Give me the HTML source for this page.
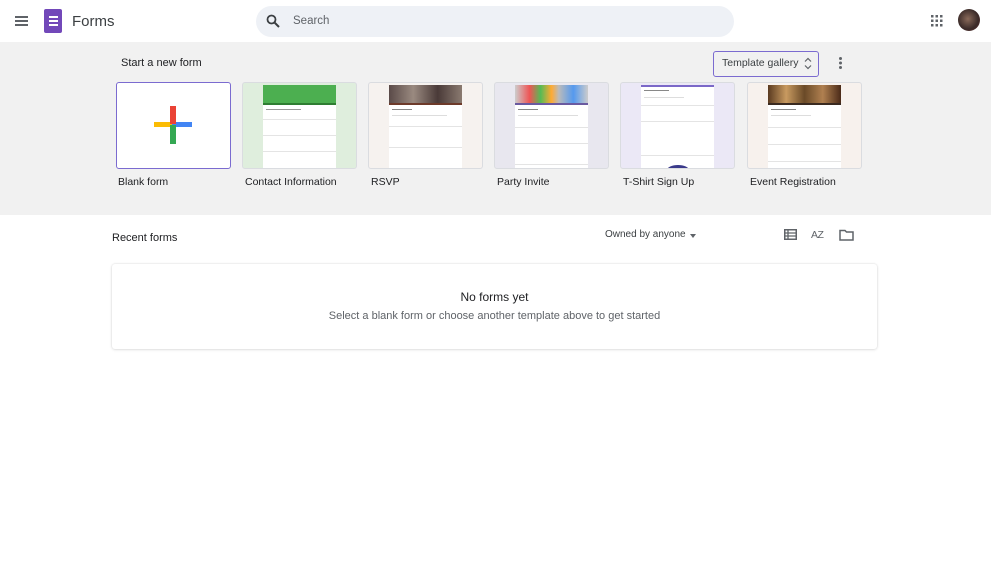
<!DOCTYPE html>
<html><head><style>
*{box-sizing:border-box;margin:0;padding:0}
body{width:1000px;height:569px;background:#fff;font-family:"Liberation Sans",Arial,sans-serif;color:#202124;position:relative;overflow:hidden}
.abs{position:absolute}
.band{left:0;top:42px;width:991px;height:173px;background:#f1f1f1}
.card{top:82px;width:115px;height:87px;border:1px solid #dadce0;border-radius:3px;overflow:hidden}
.pg{position:absolute;left:20px;top:2px;width:73px;bottom:0;background:#fff}
.lbl{top:176px;font-size:10.5px;color:#202124}
.line{position:absolute;left:3px;height:1px;background:#ddd}
.sec{position:absolute;left:0;right:0;height:1px;background:#e4e4e4}
</style></head><body>
<div class="abs" style="left:15px;top:16px;width:13px;height:2px;background:#5f6368;box-shadow:0 4px 0 #5f6368,0 8px 0 #5f6368"></div>
<div class="abs" style="left:44px;top:9px;width:18px;height:24px;background:#7248b9;border-radius:2px"></div>
<div class="abs" style="left:49px;top:16px;width:9px;height:1.5px;background:#fff;box-shadow:0 4px 0 #fff,0 8px 0 #fff"></div>
<div class="abs" style="left:72px;top:13px;font-size:15px;color:#3c4043">Forms</div>
<div class="abs" style="left:256px;top:6px;width:478px;height:31px;background:#eef1f6;border-radius:16px"></div>
<svg class="abs" style="left:266px;top:14px" width="14" height="14" viewBox="0 0 14 14"><circle cx="5.5" cy="5.5" r="4" fill="none" stroke="#3c4043" stroke-width="1.8"/><path d="M8.5 8.5L13 13" stroke="#3c4043" stroke-width="2"/></svg>
<div class="abs" style="left:293px;top:15px;font-size:11.5px;color:#5f6368">Search</div>
<svg class="abs" style="left:931px;top:15px" width="12" height="12"><g fill="#5f6368"><rect x="0" y="0" width="2.5" height="2.5"/><rect x="4.5" y="0" width="2.5" height="2.5"/><rect x="9" y="0" width="2.5" height="2.5"/><rect x="0" y="4.5" width="2.5" height="2.5"/><rect x="4.5" y="4.5" width="2.5" height="2.5"/><rect x="9" y="4.5" width="2.5" height="2.5"/><rect x="0" y="9" width="2.5" height="2.5"/><rect x="4.5" y="9" width="2.5" height="2.5"/><rect x="9" y="9" width="2.5" height="2.5"/></g></svg>
<div class="abs" style="left:958px;top:9px;width:22px;height:22px;border-radius:50%;background:radial-gradient(circle at 45% 45%,#8a6a5a,#3a2a28 60%,#6a3030)"></div>
<div class="abs band"></div>
<div class="abs" style="left:121px;top:57px;font-size:11px;color:#202124">Start a new form</div>
<div class="abs" style="left:713px;top:51px;width:106px;height:26px;border:1.5px solid #7b6bd0;border-radius:3px;background:#f1f1f1"></div>
<div class="abs" style="left:722px;top:57px;font-size:10.5px;color:#3c4043">Template gallery</div>
<svg class="abs" style="left:804px;top:57px" width="8" height="13"><path d="M1 4.5L4 1.5L7 4.5M1 8.5L4 11.5L7 8.5" fill="none" stroke="#5f6368" stroke-width="1.2"/></svg>
<div class="abs" style="left:839px;top:57px;width:3px;height:3px;border-radius:50%;background:#5f6368;box-shadow:0 4.5px 0 #5f6368,0 9px 0 #5f6368"></div>

<div class="abs card" style="left:116px;background:#fff;border:1.5px solid #7b6bd0"></div>
<div class="abs" style="left:154px;top:122px;width:19px;height:5px;background:#fbbc04"></div>
<div class="abs" style="left:172px;top:122px;width:20px;height:5px;background:#4285f4"></div>
<div class="abs" style="left:170px;top:106px;width:6px;height:18px;background:#ea4335"></div>
<div class="abs" style="left:170px;top:125px;width:6px;height:19px;background:#34a853"></div>

<div class="abs card" style="left:242px;background:#dfeedd"><div class="pg"><div style="height:18px;background:#4caf50"></div><div style="height:2px;background:#2e7d32"></div><div class="line" style="top:24px;width:35px;background:#999"></div><div class="sec" style="top:34px"></div><div class="sec" style="top:50px"></div><div class="sec" style="top:66px"></div></div></div>
<div class="abs card" style="left:368px;background:#f6f2ef"><div class="pg"><div style="height:18px;background:linear-gradient(90deg,#5a4a48,#9a8a80,#4a3a38,#8a7a70)"></div><div style="height:2px;background:#6d3a2a"></div><div class="line" style="top:24px;width:20px;background:#888"></div><div class="line" style="top:30px;width:55px"></div><div class="sec" style="top:41px"></div><div class="sec" style="top:62px"></div></div></div>
<div class="abs card" style="left:494px;background:#e8e7ef"><div class="pg"><div style="height:18px;background:linear-gradient(90deg,#ccc,#e55 20%,#5b5 35%,#fa3 50%,#bbb 60%,#59e 80%,#ccc)"></div><div style="height:2px;background:#6a5aa0"></div><div class="line" style="top:24px;width:20px;background:#888"></div><div class="line" style="top:30px;width:60px"></div><div class="sec" style="top:42px"></div><div class="sec" style="top:58px"></div><div class="sec" style="top:79px"></div></div></div>
<div class="abs card" style="left:620px;background:#ebe8f6"><div class="pg"><div style="height:2px;background:#7b68c8"></div><div class="line" style="top:5px;width:25px;background:#888"></div><div class="line" style="top:12px;width:40px"></div><div class="sec" style="top:20px"></div><div class="sec" style="top:36px"></div><div class="sec" style="top:70px"></div><div style="position:absolute;left:26px;top:80px;width:22px;height:10px;border-radius:50%;background:#3a3a8a"></div></div></div>
<div class="abs card" style="left:747px;background:#f7f1ed"><div class="pg"><div style="height:18px;background:linear-gradient(90deg,#5a3a20,#c89a60,#6a4a28,#b08050,#4a2a18)"></div><div style="height:2px;background:#3a2a20"></div><div class="line" style="top:24px;width:25px;background:#888"></div><div class="line" style="top:30px;width:40px"></div><div class="sec" style="top:42px"></div><div class="sec" style="top:59px"></div><div class="sec" style="top:76px"></div></div></div>

<div class="abs lbl" style="left:118px">Blank form</div>
<div class="abs lbl" style="left:245px">Contact Information</div>
<div class="abs lbl" style="left:371px">RSVP</div>
<div class="abs lbl" style="left:497px">Party Invite</div>
<div class="abs lbl" style="left:623px">T-Shirt Sign Up</div>
<div class="abs lbl" style="left:750px">Event Registration</div>

<div class="abs" style="left:112px;top:232px;font-size:11px;color:#202124">Recent forms</div>
<div class="abs" style="left:605px;top:229px;font-size:10px;color:#3c4043">Owned by anyone</div>
<div class="abs" style="left:690px;top:234px;width:0;height:0;border-left:3.5px solid transparent;border-right:3.5px solid transparent;border-top:4px solid #5f6368"></div>
<svg class="abs" style="left:784px;top:229px" width="13" height="11"><rect x="0.75" y="0.75" width="11.5" height="9.5" fill="none" stroke="#5f6368" stroke-width="1.5"/><path d="M4 1V10M1 4H12M1 7H12" stroke="#5f6368" stroke-width="1.3"/></svg>
<div class="abs" style="left:811px;top:229px;font-size:10.5px;color:#5f6368;letter-spacing:-0.5px">AZ</div>
<svg class="abs" style="left:839px;top:229px" width="15" height="12"><path d="M1 1.5H6L7.5 3H14V11H1Z" fill="none" stroke="#5f6368" stroke-width="1.5"/></svg>
<div class="abs" style="left:112px;top:264px;width:765px;height:85px;border-radius:3px;box-shadow:0 0 2px rgba(0,0,0,.15),0 1px 3px rgba(0,0,0,.08)"></div>
<div class="abs" style="left:112px;top:290px;width:765px;text-align:center;font-size:12px;color:#202124">No forms yet</div>
<div class="abs" style="left:112px;top:310px;width:765px;text-align:center;font-size:11px;color:#5f6368">Select a blank form or choose another template above to get started</div>
</body></html>
